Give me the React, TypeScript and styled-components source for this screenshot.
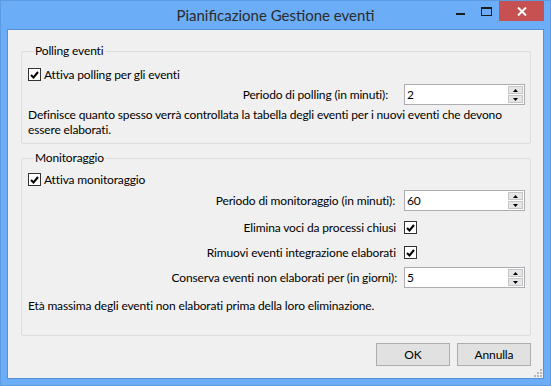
import React from "react";
import styled, { createGlobalStyle } from "styled-components";

const GlobalStyle = createGlobalStyle`
  html, body {
    margin: 0;
    padding: 0;
    background: #ffffff;
  }
  body {
    font-family: Lato, "Noto Sans", sans-serif;
    font-size: 12px;
    letter-spacing: -0.15px;
    color: #000;
  }
`;

const Frame = styled.div`
  width: 551px;
  height: 386px;
  box-sizing: border-box;
  background: #6badf6;
  border: 1px solid #5d9ae0;
  padding: 0 6px 6px 6px;
  display: flex;
  flex-direction: column;
`;

const TitleBar = styled.div`
  height: 28px;
  display: grid;
  grid-template-columns: 1fr auto 1fr;
  align-items: start;
`;

const Title = styled.div`
  grid-column: 2;
  font-size: 15px;
  letter-spacing: 0;
  line-height: 29px;
  color: #2b2b2b;
  white-space: nowrap;
`;

const Caption = styled.div`
  grid-column: 3;
  justify-self: end;
  display: flex;
`;

const CaptionButton = styled.div<{ $close?: boolean }>`
  width: ${(p) => (p.$close ? 45 : 26)}px;
  height: 20px;
  background: ${(p) => (p.$close ? "#c75050" : "transparent")};
  display: flex;
  align-items: center;
  justify-content: center;
`;

const Client = styled.div`
  flex: 1;
  position: relative;
  background: #f0f0f0;
  border: 1px solid #5590d8;
  padding: 14px 12px 0 13px;
  display: flex;
  flex-direction: column;
`;

const Group = styled.fieldset<{ $padTop: number; $padBottom: number }>`
  margin: 0 0 7px 0;
  padding: ${(p) => p.$padTop}px 5px ${(p) => p.$padBottom}px 6px;
  border: 1px solid #dcdcdc;
  border-radius: 2px;
  min-width: 0;
  display: flex;
  flex-direction: column;
`;

const Legend = styled.legend`
  margin-left: 6px;
  padding: 0 1px;
  line-height: 14px;
  font-size: 12px;
`;

const CheckRow = styled.label<{ $mt?: number }>`
  display: flex;
  align-items: center;
  gap: 3px;
  height: 17px;
  margin-top: ${(p) => p.$mt ?? 0}px;
`;

const Box = styled.span`
  width: 11px;
  height: 11px;
  border: 1px solid #333333;
  background: #ffffff;
  display: inline-flex;
  align-items: center;
  justify-content: center;
  flex: none;
`;

const FieldRow = styled.div<{ $mt?: number; $h: number }>`
  display: grid;
  grid-template-columns: 1fr 121px;
  align-items: center;
  height: ${(p) => p.$h}px;
  margin-top: ${(p) => p.$mt ?? 0}px;
`;

const FieldLabel = styled.span<{ $gap: number }>`
  text-align: right;
  padding-right: ${(p) => p.$gap}px;
  white-space: nowrap;
`;

const Spin = styled.div`
  height: 21px;
  box-sizing: border-box;
  border: 1px solid #abadb3;
  background: #ffffff;
  display: flex;
  align-items: stretch;
`;

const SpinValue = styled.span`
  flex: 1;
  padding-left: 2px;
  line-height: 19px;
`;

const SpinButtons = styled.div`
  width: 15px;
  margin: 1px;
  display: flex;
  flex-direction: column;
  gap: 1px;
`;

const SpinArrow = styled.div`
  flex: 1;
  background: #e6e6e6;
  border: 1px solid #c6c6c6;
  display: flex;
  align-items: center;
  justify-content: center;
`;

const Note = styled.p<{ $mt?: number }>`
  margin: ${(p) => p.$mt ?? 0}px 0 0 0;
  line-height: 15px;
`;

const ButtonRow = styled.div`
  display: flex;
  justify-content: flex-end;
  gap: 7px;
`;

const Button = styled.div`
  width: 74px;
  height: 23px;
  box-sizing: border-box;
  background: #e1e1e1;
  border: 1px solid #adadad;
  display: flex;
  align-items: center;
  justify-content: center;
`;

const Grip = styled.svg`
  position: absolute;
  right: 1px;
  bottom: 1px;
`;

const Check = () => (
  <svg width="9" height="8" viewBox="0 0 9 8">
    <path d="M1 4 L3.5 6.5 L8 1" fill="none" stroke="#000" strokeWidth="2" />
  </svg>
);

const CheckBox = ({ label, mt }: { label: string; mt?: number }) => (
  <CheckRow $mt={mt}>
    <Box>
      <Check />
    </Box>
    <span>{label}</span>
  </CheckRow>
);

const SpinBox = ({ value }: { value: string }) => (
  <Spin>
    <SpinValue>{value}</SpinValue>
    <SpinButtons>
      <SpinArrow>
        <svg width="5" height="3" viewBox="0 0 5 3">
          <path d="M0 3 L2.5 0 L5 3 Z" fill="#000" />
        </svg>
      </SpinArrow>
      <SpinArrow>
        <svg width="5" height="3" viewBox="0 0 5 3">
          <path d="M0 0 L2.5 3 L5 0 Z" fill="#000" />
        </svg>
      </SpinArrow>
    </SpinButtons>
  </Spin>
);

export default function App() {
  return (
    <>
      <GlobalStyle />
      <Frame>
        <TitleBar>
          <Title>Pianificazione Gestione eventi</Title>
          <Caption>
            <CaptionButton>
              <svg width="9" height="8" viewBox="0 0 9 8">
                <rect x="0" y="6" width="9" height="2" fill="#1c1c1c" />
              </svg>
            </CaptionButton>
            <CaptionButton>
              <svg width="11" height="9" viewBox="0 0 11 9">
                <rect x="0.5" y="0.5" width="10" height="8" fill="none" stroke="#1c1c1c" />
                <rect x="0" y="0" width="11" height="2" fill="#1c1c1c" />
              </svg>
            </CaptionButton>
            <CaptionButton $close>
              <svg width="10" height="9" viewBox="0 0 10 9">
                <path d="M1 0.5 L9 8.5 M9 0.5 L1 8.5" stroke="#fff" strokeWidth="2" />
              </svg>
            </CaptionButton>
          </Caption>
        </TitleBar>
        <Client>
          <Group $padTop={8} $padBottom={6}>
            <Legend>Polling eventi</Legend>
            <CheckBox label="Attiva polling per gli eventi" />
            <FieldRow $h={21} $mt={1}>
              <FieldLabel $gap={16}>Periodo di polling (in minuti):</FieldLabel>
              <SpinBox value="2" />
            </FieldRow>
            <Note $mt={2}>
              Definisce quanto spesso verrà controllata la tabella degli eventi per i nuovi eventi che devono
              essere elaborati.
            </Note>
          </Group>
          <Group $padTop={6} $padBottom={22}>
            <Legend>Monitoraggio</Legend>
            <CheckBox label="Attiva monitoraggio" />
            <FieldRow $h={21} $mt={2}>
              <FieldLabel $gap={9}>Periodo di monitoraggio (in minuti):</FieldLabel>
              <SpinBox value="60" />
            </FieldRow>
            <FieldRow $h={17} $mt={8}>
              <FieldLabel $gap={8}>Elimina voci da processi chiusi</FieldLabel>
              <Box>
                <Check />
              </Box>
            </FieldRow>
            <FieldRow $h={17} $mt={8}>
              <FieldLabel $gap={8}>Rimuovi eventi integrazione elaborati</FieldLabel>
              <Box>
                <Check />
              </Box>
            </FieldRow>
            <FieldRow $h={21} $mt={6}>
              <FieldLabel $gap={7}>Conserva eventi non elaborati per (in giorni):</FieldLabel>
              <SpinBox value="5" />
            </FieldRow>
            <Note $mt={10}>Età massima degli eventi non elaborati prima della loro eliminazione.</Note>
          </Group>
          <ButtonRow>
            <Button>OK</Button>
            <Button>Annulla</Button>
          </ButtonRow>
          <Grip width="8" height="8" viewBox="0 0 8 8">
            <rect x="6" y="0" width="2" height="2" fill="#b8b8b8" />
            <rect x="3" y="3" width="2" height="2" fill="#b8b8b8" />
            <rect x="6" y="3" width="2" height="2" fill="#b8b8b8" />
            <rect x="0" y="6" width="2" height="2" fill="#b8b8b8" />
            <rect x="3" y="6" width="2" height="2" fill="#b8b8b8" />
            <rect x="6" y="6" width="2" height="2" fill="#b8b8b8" />
          </Grip>
        </Client>
      </Frame>
    </>
  );
}
